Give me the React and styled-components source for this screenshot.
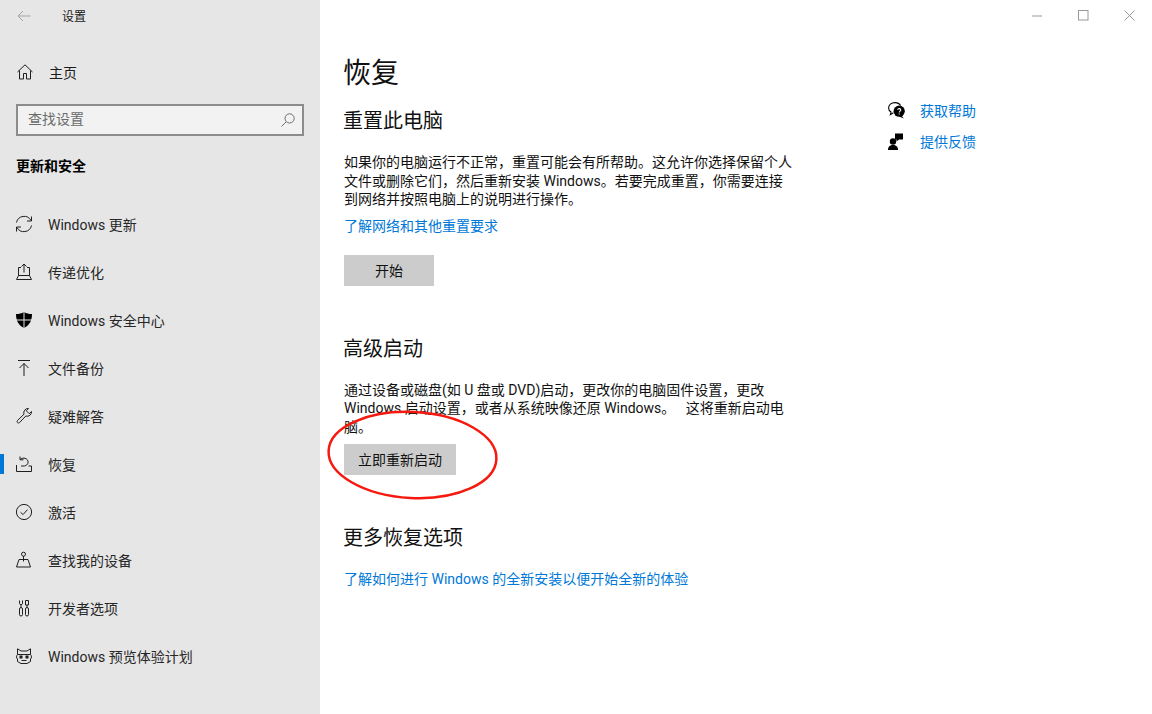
import React from "react";
import styled, { createGlobalStyle } from "styled-components";

const Global = createGlobalStyle`
  html, body { margin: 0; padding: 0; background: #fff; }
  body { font-family: Roboto, "Noto Sans CJK SC", sans-serif; color: #000; }
  * { box-sizing: border-box; }
`;

const Page = styled.div`
  width: 1152px;
  height: 714px;
  display: flex;
  overflow: hidden;
  position: relative;
`;

const Sidebar = styled.aside`
  width: 320px;
  flex: none;
  background: #e6e6e6;
  display: flex;
  flex-direction: column;
  padding-top: 4px;
`;

const TitleBar = styled.div`
  height: 24px;
  display: flex;
  align-items: center;
  padding-left: 17px;
  font-size: 12px;
  color: #1a1a1a;
  gap: 31px;
`;

const TitleText = styled.span`
  margin-bottom: 2px;
`;

const HomeRow = styled.div`
  margin-top: 20px;
  height: 48px;
  display: flex;
  align-items: center;
  padding-left: 17px;
  gap: 16px;
  font-size: 14px;
  color: #1a1a1a;
`;

const Search = styled.div`
  margin: 8px 16px 0 16px;
  height: 32px;
  border: 2px solid #8c8c8c;
  background: #f2f2f2;
  display: flex;
  align-items: center;
  justify-content: space-between;
  padding: 0 7px 0 10px;
  font-size: 14px;
  line-height: 24px;
  color: #6b6b6b;
`;

const SearchText = styled.span`
  margin-bottom: 2px;
`;

const GroupLabel = styled.div`
  margin: 18px 0 0 16px;
  height: 24px;
  line-height: 24px;
  font-size: 14px;
  font-weight: 700;
`;

const NavList = styled.nav`
  margin-top: 22px;
  display: flex;
  flex-direction: column;
`;

const NavItem = styled.div`
  height: 48px;
  display: flex;
  align-items: center;
  gap: 16px;
  padding-left: 16px;
  font-size: 14px;
  color: #262626;
  position: relative;
  ${(p) =>
    p.$active &&
    `&::before {
      content: "";
      position: absolute;
      left: 0;
      top: 14px;
      width: 4px;
      height: 20px;
      background: #0078d7;
    }`}
`;

const IconBox = styled.span`
  width: 16px;
  height: 16px;
  flex: none;
  display: inline-flex;
  svg { display: block; overflow: visible; }
`;

const Main = styled.main`
  flex: 1;
  display: flex;
  padding-left: 24px;
  position: relative;
`;

const Content = styled.div`
  width: 456px;
  flex: none;
  padding-top: 48px;
`;

const PageTitle = styled.h1`
  margin: 0 0 0 -1px;
  font-size: 28px;
  font-weight: 400;
  line-height: 52px;
  color: #111;
`;

const Heading = styled.h2`
  margin: 0 0 0 -1px;
  font-size: 20px;
  font-weight: 400;
  line-height: 30px;
  margin-top: ${(p) => p.$top}px;
  color: #111;
`;

const Para = styled.p`
  margin: 17px 0 0;
  font-size: 14px;
  line-height: 18.6px;
  white-space: pre;
  color: #111;
`;

const Link = styled.a`
  display: block;
  font-size: 14px;
  line-height: 20px;
  color: #0078d7;
  margin-top: ${(p) => p.$top}px;
  white-space: nowrap;
`;

const Button = styled.div`
  display: flex;
  align-items: center;
  justify-content: center;
  width: ${(p) => p.$w}px;
  height: 31px;
  margin-top: ${(p) => p.$top}px;
  background: #cccccc;
  font-size: 14px;
  color: #111;
`;

const Aside = styled.div`
  margin-left: 88px;
  padding-top: 100px;
  display: flex;
  flex-direction: column;
  gap: 11px;
`;

const HelpRow = styled.div`
  height: 20px;
  display: flex;
  align-items: center;
  gap: 15px;
  font-size: 14px;
  color: #0078d7;
`;

const WindowControls = styled.div`
  position: absolute;
  top: 10px;
  right: 17px;
  display: flex;
  gap: 35px;
`;

const Annotation = styled.svg`
  position: absolute;
  left: 320px;
  top: 400px;
  pointer-events: none;
`;

const Line = (props) => (
  <svg width="16" height="16" viewBox="0 0 16 16" fill="none" stroke="#1f1f1f" strokeWidth="1" {...props} />
);

const icons = {
  update: (
    <Line>
      <path d="M0.5 6.5A7.8 7.8 0 0 1 15 4.5M15.5 9.5A7.8 7.8 0 0 1 1 11.5" />
      <path d="M15.5 0.5V5H11M0.5 15.5V11H5" />
    </Line>
  ),
  delivery: (
    <Line>
      <path d="M2.5 3.5V11.5M13.5 3.5V11.5M2.5 11.5L0.5 15.5H15.5L13.5 11.5M2.5 11.5H13.5" />
      <path d="M8 0V8.5M5.5 2.5L8 0L10.5 2.5M5 3.5H2.5M11 3.5H13.5" />
    </Line>
  ),
  shield: (
    <svg width="16" height="16" viewBox="0 0 16 16">
      <path d="M8 0C5.6 1.6 3 2 0 2C0 8 2 13 8 16C14 13 16 8 16 2C13 2 10.4 1.6 8 0Z" fill="#000" />
      <path d="M8 0V16M0 8H16" stroke="#e6e6e6" strokeWidth="1" fill="none" />
    </svg>
  ),
  backup: (
    <Line>
      <path d="M2 0.5H14M8 16V3.5M3.5 8L8 3.5L12.5 8" />
    </Line>
  ),
  wrench: (
    <Line>
      <path d="M15.5 3.5A4.3 4.3 0 0 1 9.8 8L3.5 14.6C2.3 16 0.2 14 1.4 12.6L8 6.2A4.3 4.3 0 0 1 12.5 0.5L10.3 2.8L13.2 5.7Z" />
    </Line>
  ),
  recovery: (
    <Line>
      <path d="M4.2 3.5A4.5 4 0 1 1 8.5 10H5" />
      <path d="M4 0.5V3.8H7.5" />
      <path d="M0.5 9V15.5H15.5V10H12.5" />
    </Line>
  ),
  activate: (
    <Line>
      <circle cx="8" cy="8" r="7.6" />
      <path d="M4.5 8.2L7 10.6L11.5 5.6" />
    </Line>
  ),
  find: (
    <Line>
      <circle cx="7.5" cy="2.2" r="2" />
      <path d="M7.5 4.2V9.5M3 7.5H12L14.5 15H0.5Z" />
    </Line>
  ),
  dev: (
    <Line>
      <rect x="3.5" y="7.5" width="3" height="8.5" rx="1.5" />
      <rect x="9.5" y="7.5" width="3" height="8.5" rx="1.5" />
      <path d="M3.5 0.5V3.5C3.5 5 6.5 5 6.5 3.5V0.5M5 5V7.5M9.5 0.5H12.5V5H9.5ZM11 5V7.5" />
    </Line>
  ),
  insider: (
    <Line>
      <path d="M1.5 0.8L5 3H11L14.5 0.8V6.5C15.8 8 15.8 10 14.5 11V13.5L11 15.5H5L1.5 13.5V11C0.2 10 0.2 8 1.5 6.5Z" />
      <path d="M1.5 6.5H14.5" />
      <rect x="4" y="8" width="2" height="2" fill="#1f1f1f" />
      <rect x="10" y="8" width="2" height="2" fill="#1f1f1f" />
      <path d="M5.5 12.5H10.5" />
    </Line>
  ),
};

const navItems = [
  ["update", "Windows 更新"],
  ["delivery", "传递优化"],
  ["shield", "Windows 安全中心"],
  ["backup", "文件备份"],
  ["wrench", "疑难解答"],
  ["recovery", "恢复", true],
  ["activate", "激活"],
  ["find", "查找我的设备"],
  ["dev", "开发者选项"],
  ["insider", "Windows 预览体验计划"],
];

export default function App() {
  return (
    <Page>
      <Global />
      <Sidebar>
        <TitleBar>
          <svg width="14" height="12" viewBox="0 0 14 12" fill="none" stroke="#a3a3a3">
            <path d="M13.5 6H1M6 1L1 6L6 11" />
          </svg>
          <TitleText>设置</TitleText>
        </TitleBar>
        <HomeRow>
          <IconBox>
            <Line>
              <path d="M0.5 8L8 0.8L15.5 8M2.5 6.5V15H6.5V9.5H9.5V15H13.5V6.5" />
            </Line>
          </IconBox>
          主页
        </HomeRow>
        <Search>
          <SearchText>查找设置</SearchText>
          <svg width="14" height="14" viewBox="0 0 14 14" fill="none" stroke="#6e6e6e">
            <circle cx="8.6" cy="5.4" r="4.6" />
            <path d="M5.4 8.6L0.5 13.5" />
          </svg>
        </Search>
        <GroupLabel>更新和安全</GroupLabel>
        <NavList>
          {navItems.map(([icon, label, active]) => (
            <NavItem key={label} $active={active}>
              <IconBox>{icons[icon]}</IconBox>
              {label}
            </NavItem>
          ))}
        </NavList>
      </Sidebar>
      <Main>
        <Content>
          <PageTitle>恢复</PageTitle>
          <Heading $top={6}>重置此电脑</Heading>
          <Para>
            如果你的电脑运行不正常，重置可能会有所帮助。这允许你选择保留个人
            <br />
            文件或删除它们，然后重新安装 Windows。若要完成重置，你需要连接
            <br />
            到网络并按照电脑上的说明进行操作。
          </Para>
          <Link $top={7}>了解网络和其他重置要求</Link>
          <Button $w={90} $top={19}>开始</Button>
          <Heading $top={48}>高级启动</Heading>
          <Para>
            通过设备或磁盘(如 U 盘或 DVD)启动，更改你的电脑固件设置，更改
            <br />
            {"Windows 启动设置，或者从系统映像还原 Windows。   这将重新启动电"}
            <br />
            脑。
          </Para>
          <Button $w={112} $top={7}>立即重新启动</Button>
          <Heading $top={48}>更多恢复选项</Heading>
          <Link $top={16}>了解如何进行 Windows 的全新安装以便开始全新的体验</Link>
        </Content>
        <Aside>
          <HelpRow>
            <svg width="17" height="17" viewBox="0 0 17 17">
              <path d="M7 0.6C3.2 0.6 0.6 3 0.6 6C0.6 7.8 1.6 9.2 3 10L2.4 12.6L5.4 10.8" fill="none" stroke="#000" strokeWidth="1.1" />
              <path d="M7 0.6C9.6 0.6 11.6 1.8 12.6 3.6" fill="none" stroke="#000" strokeWidth="1.1" />
              <circle cx="11.2" cy="9.2" r="5.6" fill="#000" />
              <path d="M13.5 13.5L15.8 16.6L11 14.5Z" fill="#000" />
              <path d="M9.6 7.8C9.8 6.2 12.8 6.2 12.8 8C12.8 9.2 11.2 9.2 11.2 10.6M11.2 11.4V12.6" fill="none" stroke="#fff" strokeWidth="1.1" />
            </svg>
            获取帮助
          </HelpRow>
          <HelpRow>
            <svg width="17" height="17" viewBox="0 0 17 17" fill="#000">
              <circle cx="5" cy="8.5" r="3.2" />
              <path d="M0 17C0 13.4 2 12 5 12C8 12 10 13.4 10 17Z" />
              <path d="M7 0.5H15V6.5H11L8.5 8.5V6.5H7Z" />
            </svg>
            提供反馈
          </HelpRow>
        </Aside>
        <WindowControls>
          <svg width="11" height="11" viewBox="0 0 11 11" stroke="#999">
            <path d="M0 6H10" />
          </svg>
          <svg width="11" height="11" viewBox="0 0 11 11" fill="none" stroke="#999">
            <rect x="0.5" y="0.5" width="9.5" height="9.5" />
          </svg>
          <svg width="11" height="11" viewBox="0 0 11 11" stroke="#999">
            <path d="M0.5 0.5L10.5 10.5M10.5 0.5L0.5 10.5" />
          </svg>
        </WindowControls>
      </Main>
      <Annotation width="190" height="110" viewBox="0 0 190 110">
        <ellipse cx="92.5" cy="55" rx="84" ry="43" fill="none" stroke="#f5190f" strokeWidth="2.5" transform="rotate(3 92.5 55)" />
      </Annotation>
    </Page>
  );
}
